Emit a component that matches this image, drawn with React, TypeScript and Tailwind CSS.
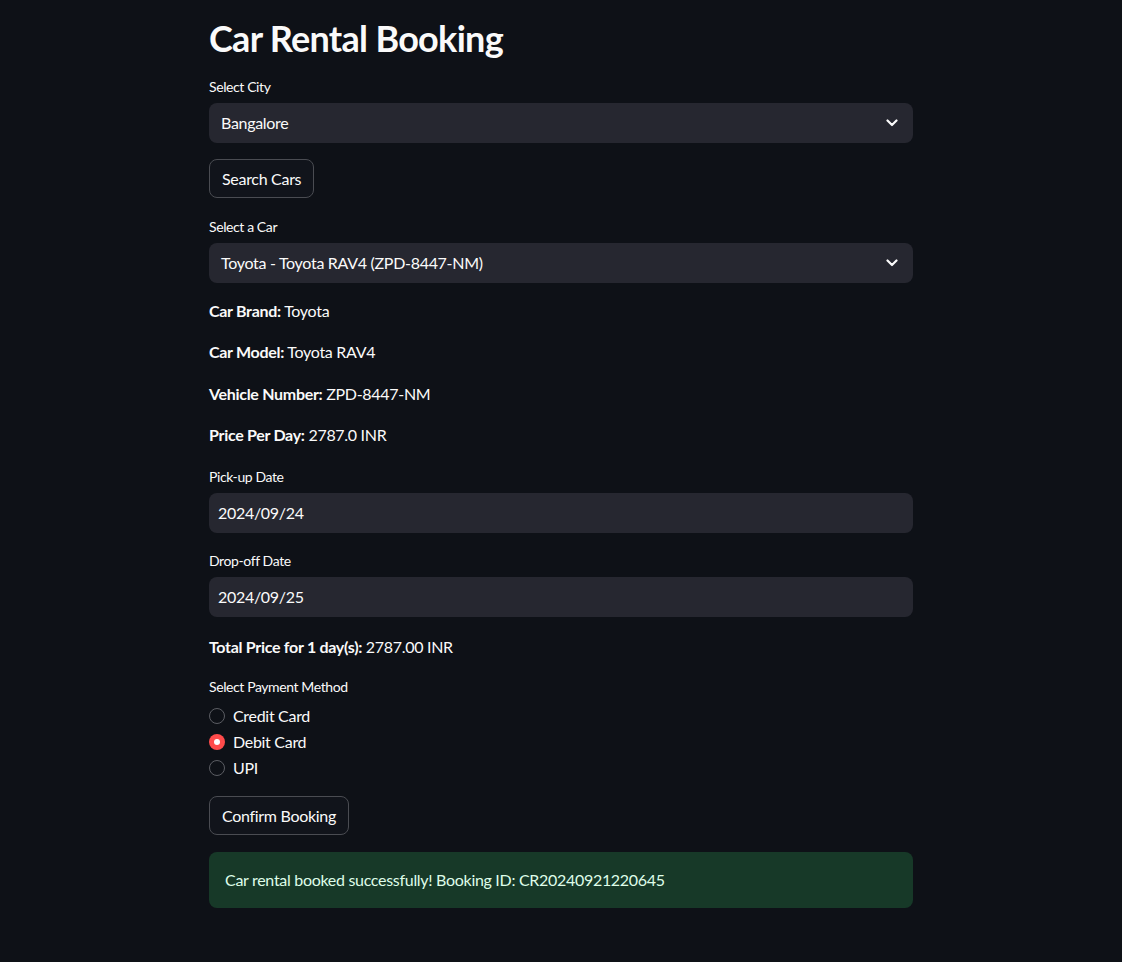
import React from "react";

const Chevron = () => (
  <svg width="12" height="8" viewBox="0 0 12 8" className="shrink-0">
    <path d="M1.5 1.5 L6 6 L10.5 1.5" fill="none" stroke="#fafafa" strokeWidth="2.2" strokeLinecap="round" strokeLinejoin="round" />
  </svg>
);

const Label = ({ children, className = "" }: { children: React.ReactNode; className?: string }) => (
  <div className={`h-[20px] text-[14px] leading-[20px] tracking-[-0.4px] text-[#fafafa] ${className}`}>{children}</div>
);

const SelectBox = ({ value, className = "" }: { value: string; className?: string }) => (
  <div className={`flex h-[40px] items-center justify-between rounded-[8px] bg-[#262730] pl-[12px] pr-[15px] ${className}`}>
    <span className="text-[16px]">{value}</span>
    <Chevron />
  </div>
);

const InputBox = ({ value, className = "" }: { value: string; className?: string }) => (
  <div className={`flex h-[40px] items-center rounded-[8px] bg-[#262730] pl-[9px] ${className}`}>
    <span className="text-[16px]">{value}</span>
  </div>
);

const Btn = ({ children, className = "" }: { children: React.ReactNode; className?: string }) => (
  <div className={`flex h-[39px] w-fit items-center rounded-[8px] border border-[#4a4c52] bg-[#11141b] px-[12px] text-[16px] ${className}`}>
    {children}
  </div>
);

const Info = ({ k, v, className = "" }: { k: string; v: string; className?: string }) => (
  <div className={`h-[24px] text-[16px] leading-[24px] ${className}`}>
    <span className="font-bold">{k}</span> {v}
  </div>
);

const Radio = ({ label, checked = false }: { label: string; checked?: boolean }) => (
  <div className="flex h-[26px] items-center gap-[8px]">
    {checked ? (
      <span className="flex h-[16px] w-[16px] items-center justify-center rounded-full bg-[#ff4b4b]">
        <span className="h-[6px] w-[6px] rounded-full bg-white" />
      </span>
    ) : (
      <span className="h-[16px] w-[16px] rounded-full border border-[#5b5d63]" />
    )}
    <span className="text-[16px]">{label}</span>
  </div>
);

export default function App() {
  return (
    <div
      className="min-h-[962px] bg-[#0e1117] tracking-[-0.3px] text-[#fafafa]"
      style={{ fontFamily: "Lato, 'Noto Sans', sans-serif" }}
    >
      <div className="mx-auto flex w-[704px] flex-col pt-[14px]">
        <h1 className="h-[48px] text-[36px] font-bold leading-[48px] tracking-[-0.7px]">Car Rental Booking</h1>
        <Label className="mt-[15px]">Select City</Label>
        <SelectBox value="Bangalore" className="mt-[6px]" />
        <Btn className="mt-[16px]">Search Cars</Btn>
        <Label className="mt-[19px]">Select a Car</Label>
        <SelectBox value="Toyota - Toyota RAV4 (ZPD-8447-NM)" className="mt-[6px]" />
        <Info k="Car Brand:" v="Toyota" className="mt-[16px]" />
        <Info k="Car Model:" v="Toyota RAV4" className="mt-[17px]" />
        <Info k="Vehicle Number:" v="ZPD-8447-NM" className="mt-[18px]" />
        <Info k="Price Per Day:" v="2787.0 INR" className="mt-[17px]" />
        <Label className="mt-[20px]">Pick-up Date</Label>
        <InputBox value="2024/09/24" className="mt-[6px]" />
        <Label className="mt-[18px]">Drop-off Date</Label>
        <InputBox value="2024/09/25" className="mt-[6px]" />
        <Info k="Total Price for 1 day(s):" v="2787.00 INR" className="mt-[18px]" />
        <Label className="mt-[18px]">Select Payment Method</Label>
        <div className="mt-[6px] flex flex-col">
          <Radio label="Credit Card" />
          <Radio label="Debit Card" checked />
          <Radio label="UPI" />
        </div>
        <Btn className="mt-[15px]">Confirm Booking</Btn>
        <div className="mt-[17px] flex h-[56px] items-center rounded-[8px] bg-[#173928] px-[16px] text-[16px] text-[#dffde9]">
          Car rental booked successfully! Booking ID: CR20240921220645
        </div>
      </div>
    </div>
  );
}
